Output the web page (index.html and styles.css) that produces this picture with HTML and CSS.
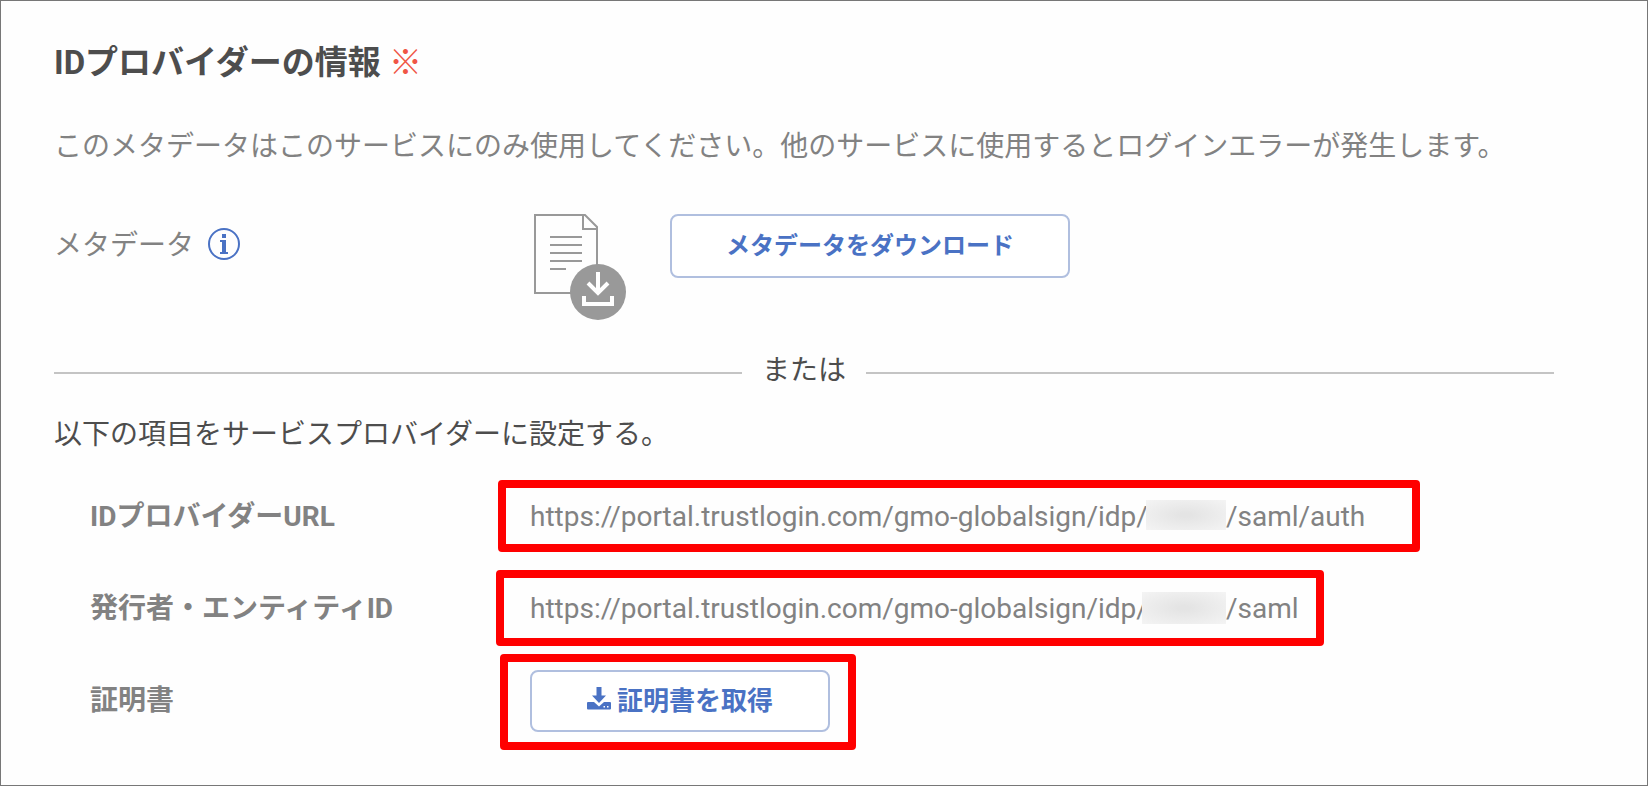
FILE: index.html
```html
<!DOCTYPE html>
<html lang="ja">
<head>
  <meta charset="UTF-8" />
  <meta name="viewport" content="width=device-width, initial-scale=1.0" />
  <title>IDプロバイダーの情報</title>
  <link rel="stylesheet" href="styles.css">
</head>
<body>
  <main class="panel">
    <h1 class="title">IDプロバイダーの情報 <span class="required">※</span></h1>
    <p class="note">このメタデータはこのサービスにのみ使用してください。他のサービスに使用するとログインエラーが発生します。</p>

    <div class="metadata">
      <div class="metadata-label">
        <span>メタデータ</span>
        <svg class="info" viewBox="0 0 32 32" aria-hidden="true">
          <circle cx="16" cy="16" r="15" fill="none" stroke="#4a72c4" stroke-width="2" />
          <path d="M14 6h4v4h-4zM12 12h6v12h2v2h-8v-2h2V14h-2z" fill="#4a72c4" />
        </svg>
      </div>
      <svg class="doc" viewBox="0 0 92 106" aria-hidden="true">
        <path d="M1 1H51L63 13V79H1zM49 1V15H63" fill="none" stroke="#999" stroke-width="2" />
        <path d="M16 23H48M16 31H48M16 39H48M16 47H48M16 55H32" stroke="#999" stroke-width="2" />
        <circle cx="64" cy="78" r="28" fill="#999" />
        <path d="M64 58V79M54 69L64 79L74 69" fill="none" stroke="#fff" stroke-width="4" />
        <path d="M50 82V90H78V82" fill="none" stroke="#fff" stroke-width="4" />
      </svg>
      <button type="button" class="btn btn-metadata">メタデータをダウンロード</button>
    </div>

    <div class="divider">または</div>

    <p class="lead">以下の項目をサービスプロバイダーに設定する。</p>

    <dl class="settings">
      <div class="row">
        <dt>IDプロバイダーURL</dt>
        <dd class="mark mark-url">https://portal.trustlogin.com/gmo-globalsign/idp/<span class="mask"></span>/saml/auth</dd>
      </div>
      <div class="row">
        <dt>発行者・エンティティID</dt>
        <dd class="mark mark-entity">https://portal.trustlogin.com/gmo-globalsign/idp/<span class="mask mask-wide"></span>/saml</dd>
      </div>
      <div class="row">
        <dt>証明書</dt>
        <dd class="mark mark-cert">
          <button type="button" class="btn btn-cert">
            <svg class="download" viewBox="0 0 24 24" aria-hidden="true">
              <path d="M1 16h6l5 4.500 5-4.500h6q1 0 1 1v5.500q0 1-1 1H1q-1 0-1-1V17q0-1 1-1z" fill="#4a72c4" />
              <path d="M9.500 1h5v8.500h4.500L12 17 5 9.500h4.500z" fill="#4a72c4" />
              <path d="M16.500 20h1.500v1.500h-1.500zM20 20h1.500v1.500H20z" fill="#fff" />
            </svg>
            証明書を取得
          </button>
        </dd>
      </div>
    </dl>
  </main>
</body>
</html>
```
FILE: styles.css
```css
* {
  box-sizing: border-box;
}
body {
  margin: 0;
  font-family: Roboto, "Noto Sans CJK JP", sans-serif;
  font-size: 28px;
  line-height: 40px;
  color: #828282;
  background-color: #fefefe;
}
.panel {
  min-height: 100vh;
  padding: 38px 93px 34px 53px;
  border: 1px solid #777;
}
.title {
  margin: 0;
  font-size: 33px;
  line-height: 48px;
  color: #4d4d4d;
}
.required {
  font-weight: normal;
  color: #f05545;
}
.note {
  margin: 40px 0 47px;
}
.metadata {
  display: grid;
  grid-template-columns: 480px 92px 400px;
  align-items: start;
}
.metadata-label {
  display: flex;
  align-items: flex-start;
  gap: 14px;
  padding-top: 12px;
}
.info {
  width: 32px;
  height: 32px;
  margin-top: 2px;
}
.doc {
  width: 92px;
  height: 106px;
}
.btn {
  display: flex;
  align-items: center;
  justify-content: center;
  gap: 6px;
  padding: 0 0 6px;
  font-family: inherit;
  font-weight: bold;
  color: #4a72c4;
  background-color: #fff;
  border: 2px solid #b0bfdf;
  border-radius: 8px;
  cursor: pointer;
}
.btn-metadata {
  width: 400px;
  height: 64px;
  margin-left: 44px;
  font-size: 24px;
}
.btn-cert {
  width: 300px;
  height: 62px;
  font-size: 26px;
}
.download {
  width: 24px;
  height: 24px;
}
.divider {
  display: flex;
  align-items: center;
  gap: 20px;
  margin-top: 31px;
  color: #4d4d4d;
}
.divider::before,
.divider::after {
  content: "";
  flex: 1;
  height: 2px;
  margin-top: 4px;
  background-color: #c4c4c4;
}
.lead {
  margin: 24px 0 16px;
  color: #4d4d4d;
}
.settings {
  margin: 0;
  padding-left: 36px;
}
.row {
  display: grid;
  grid-template-columns: 440px auto;
  justify-content: start;
  align-items: center;
  height: 92px;
}
.row dt {
  font-weight: bold;
}
.row dd {
  margin: 0;
}
/* red frame drawn around a value */
.mark {
  position: relative;
}
.mark::after {
  content: "";
  position: absolute;
  border: 8px solid #f00;
  border-radius: 4px;
  pointer-events: none;
}
.mark-url::after {
  inset: -17px -55px -15px -32px;
}
.mark-entity::after {
  inset: -19px -25px -17px -34px;
}
.mark-cert::after {
  inset: -16px -26px -18px -30px;
}
/* blurred-out tenant id */
.mask {
  display: inline-block;
  width: 80px;
  height: 30px;
  margin-left: -2px;
  vertical-align: -4px;
  background: radial-gradient(ellipse, #e4e4e4 10%, #f4f4f4 100%);
}
.mask-wide {
  width: 84px;
  height: 32px;
  margin-left: -6px;
  vertical-align: -6px;
}
```
